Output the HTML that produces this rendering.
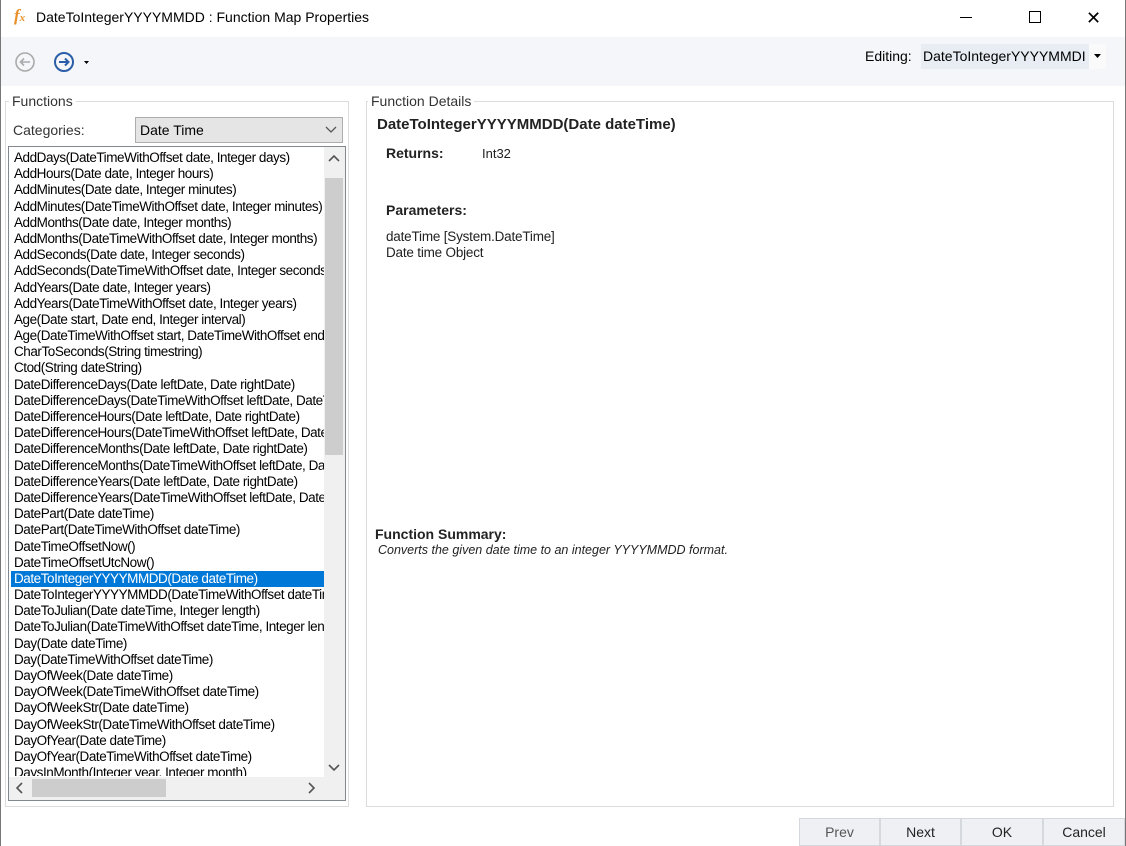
<!DOCTYPE html><html><head><style>
*{margin:0;padding:0;box-sizing:border-box}
body{width:1126px;height:846px;background:#fff;font-family:"Liberation Sans",sans-serif;font-size:13px;color:#000;position:relative;overflow:hidden}
.a{position:absolute}
.win{left:0;top:0;width:1126px;height:846px;border-left:1px solid #777;border-right:1px solid #777}
.list div{height:16.2px;line-height:16px;white-space:nowrap;padding-left:3px;letter-spacing:-0.45px;font-size:13.5px}
.grp{border:1px solid #dcdcdc}
.btn{top:818px;height:28px;background:#eef0f4;border:1px solid #d5d9de;text-align:center;line-height:26px;font-size:14px;color:#222}
</style></head><body>
<div class="a win"></div>
<div class="a" style="left:14px;top:6px;font-family:'Liberation Serif',serif;font-style:italic;font-weight:bold;color:#e8912a;font-size:17px">f<span style="font-size:11px">x</span></div>
<div class="a" style="left:36px;top:9px;font-size:14px">DateToIntegerYYYYMMDD : Function Map Properties</div>
<div class="a" style="left:960px;top:17px;width:12px;height:1px;background:#000"></div>
<div class="a" style="left:1029px;top:11px;width:12px;height:12px;border:1px solid #000"></div>
<div class="a" style="left:1086px;top:8px;font-size:18px">✕</div>
<div class="a" style="left:1px;top:37px;width:1124px;height:49px;background:#f4f6f9"></div>
<svg class="a" style="left:14px;top:51px" width="85" height="22"><circle cx="11" cy="11" r="9" fill="none" stroke="#aaa" stroke-width="1.6"/><path d="M16 11H7M10 7.5L6.5 11 10 14.5" fill="none" stroke="#aaa" stroke-width="1.6"/><circle cx="50" cy="11" r="9" fill="none" stroke="#2b5ea8" stroke-width="2"/><path d="M45 11H54M51 7.5L54.5 11 51 14.5" fill="none" stroke="#2b5ea8" stroke-width="2"/><path d="M70 10h5l-2.5 3z" fill="#000"/></svg>
<div class="a" style="left:865px;top:48px;font-size:14px">Editing:</div>
<div class="a" style="left:921px;top:44px;width:168px;height:25px;background:#e8edf3;font-size:14px;line-height:25px;padding-left:2px;white-space:nowrap;overflow:hidden">DateToIntegerYYYYMMDI</div>
<div class="a" style="left:1089px;top:44px;width:17px;height:25px;background:#fafafa"></div>
<svg class="a" style="left:1094px;top:54px" width="8" height="5"><path d="M0 0h7l-3.5 4z" fill="#000"/></svg>

<div class="a grp" style="left:5px;top:101px;width:344px;height:706px"></div>
<div class="a" style="left:9px;top:93px;background:#fff;padding:0 3px;font-size:14px;color:#333">Functions</div>
<div class="a" style="left:13px;top:122px;font-size:14px;color:#333">Categories:</div>
<div class="a" style="left:135px;top:117px;width:208px;height:26px;background:#e5e5e5;border:1px solid #adadad;font-size:14px;line-height:24px;padding-left:4px">Date Time</div>
<svg class="a" style="left:325px;top:126px" width="12" height="8"><path d="M1 1l5 5 5-5" fill="none" stroke="#555" stroke-width="1.3"/></svg>
<div class="a" style="left:8px;top:146px;width:338px;height:655px;border:1px solid #828790;background:#fff;overflow:hidden">
<div class="a list" style="left:2px;top:3px;width:313px;height:626px;overflow:hidden">
<div>AddDays(DateTimeWithOffset date, Integer days)</div><div>AddHours(Date date, Integer hours)</div><div>AddMinutes(Date date, Integer minutes)</div><div>AddMinutes(DateTimeWithOffset date, Integer minutes)</div><div>AddMonths(Date date, Integer months)</div><div>AddMonths(DateTimeWithOffset date, Integer months)</div><div>AddSeconds(Date date, Integer seconds)</div><div>AddSeconds(DateTimeWithOffset date, Integer seconds)</div><div>AddYears(Date date, Integer years)</div><div>AddYears(DateTimeWithOffset date, Integer years)</div><div>Age(Date start, Date end, Integer interval)</div><div>Age(DateTimeWithOffset start, DateTimeWithOffset end)</div><div>CharToSeconds(String timestring)</div><div>Ctod(String dateString)</div><div>DateDifferenceDays(Date leftDate, Date rightDate)</div><div>DateDifferenceDays(DateTimeWithOffset leftDate, DateTime)</div><div>DateDifferenceHours(Date leftDate, Date rightDate)</div><div>DateDifferenceHours(DateTimeWithOffset leftDate, DateTime)</div><div>DateDifferenceMonths(Date leftDate, Date rightDate)</div><div>DateDifferenceMonths(DateTimeWithOffset leftDate, Date)</div><div>DateDifferenceYears(Date leftDate, Date rightDate)</div><div>DateDifferenceYears(DateTimeWithOffset leftDate, Date)</div><div>DatePart(Date dateTime)</div><div>DatePart(DateTimeWithOffset dateTime)</div><div>DateTimeOffsetNow()</div><div>DateTimeOffsetUtcNow()</div><div style="background:#0078d7;color:#fff">DateToIntegerYYYYMMDD(Date dateTime)</div><div>DateToIntegerYYYYMMDD(DateTimeWithOffset dateTime)</div><div>DateToJulian(Date dateTime, Integer length)</div><div>DateToJulian(DateTimeWithOffset dateTime, Integer length)</div><div>Day(Date dateTime)</div><div>Day(DateTimeWithOffset dateTime)</div><div>DayOfWeek(Date dateTime)</div><div>DayOfWeek(DateTimeWithOffset dateTime)</div><div>DayOfWeekStr(Date dateTime)</div><div>DayOfWeekStr(DateTimeWithOffset dateTime)</div><div>DayOfYear(Date dateTime)</div><div>DayOfYear(DateTimeWithOffset dateTime)</div><div>DaysInMonth(Integer year, Integer month)</div>
</div>
<div class="a" style="left:315px;top:0;width:21px;height:630px;background:#f0f0f0"></div>
<div class="a" style="left:316px;top:31px;width:18px;height:277px;background:#cdcdcd"></div>
<svg class="a" style="left:319px;top:8px" width="12" height="8"><path d="M1 6l5-5 5 5" fill="none" stroke="#555" stroke-width="1.6"/></svg>
<svg class="a" style="left:319px;top:617px" width="12" height="8"><path d="M1 1l5 5 5-5" fill="none" stroke="#555" stroke-width="1.6"/></svg>
<div class="a" style="left:0;top:630px;width:336px;height:23px;background:#f0f0f0"></div>
<div class="a" style="left:23px;top:632px;width:134px;height:18px;background:#cdcdcd"></div>
<svg class="a" style="left:7px;top:635px" width="8" height="12"><path d="M6 1L1 6l5 5" fill="none" stroke="#555" stroke-width="1.6"/></svg>
<svg class="a" style="left:299px;top:635px" width="8" height="12"><path d="M1 1l5 5-5 5" fill="none" stroke="#555" stroke-width="1.6"/></svg>
</div>

<div class="a grp" style="left:366px;top:101px;width:748px;height:706px"></div>
<div class="a" style="left:368px;top:93px;background:#fff;padding:0 3px;font-size:14px;color:#333">Function Details</div>
<div class="a" style="left:377px;top:116px;font-size:15px;font-weight:bold;color:#222">DateToIntegerYYYYMMDD(Date dateTime)</div>
<div class="a" style="left:386px;top:145px;font-weight:bold;color:#222;font-size:14px">Returns:</div>
<div class="a" style="left:482px;top:146px;color:#222">Int32</div>
<div class="a" style="left:386px;top:202px;font-weight:bold;color:#222;font-size:14px">Parameters:</div>
<div class="a" style="left:386px;top:229px;color:#222;line-height:16px;font-size:13.5px;letter-spacing:-0.2px">dateTime [System.DateTime]<br>Date time Object</div>
<div class="a" style="left:375px;top:526px;font-weight:bold;color:#222;font-size:14px">Function Summary:</div>
<div class="a" style="left:378px;top:543px;font-style:italic;font-size:12.5px;color:#222">Converts the given date time to an integer YYYYMMDD format.</div>

<div class="a btn" style="left:799px;width:81px;color:#555">Prev</div>
<div class="a btn" style="left:880px;width:81px">Next</div>
<div class="a btn" style="left:961px;width:82px">OK</div>
<div class="a btn" style="left:1043px;width:82px">Cancel</div>
</body></html>
